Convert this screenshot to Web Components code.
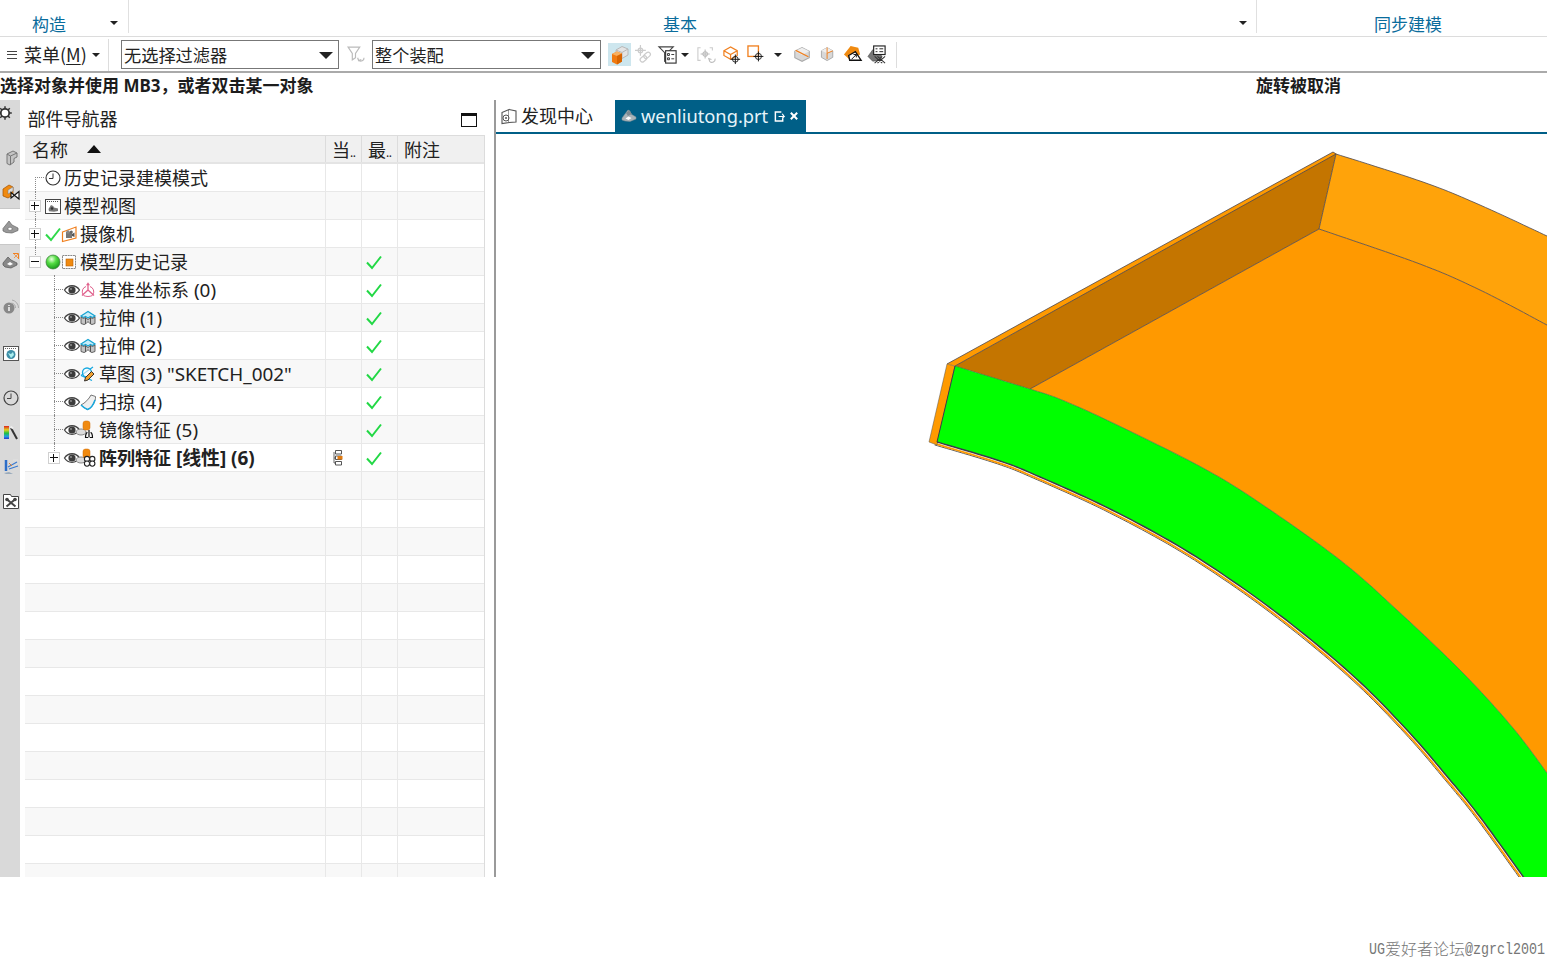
<!DOCTYPE html>
<html lang="zh"><head><meta charset="utf-8"><title>NX</title>
<style>
html,body{margin:0;padding:0;background:#fff;overflow:hidden}
body{font-family:"Noto Sans","Noto Sans CJK SC",sans-serif;color:#222}
</style></head><body>
<ug-app>
  <ug-ribbon>
    <ug-ribbon-group style="--w:129px;--pad:32px;--arrow:110px" arrow>构造</ug-ribbon-group>
    <ug-ribbon-group style="--w:1128px;--pad:534px;--arrow:1110px" arrow>基本</ug-ribbon-group>
    <ug-ribbon-group style="--w:290px;--pad:117px">同步建模</ug-ribbon-group>
  </ug-ribbon>
  <ug-toolbar></ug-toolbar>
  <ug-status></ug-status>
  <ug-main>
    <ug-rail></ug-rail>
    <ug-navigator></ug-navigator>
    <ug-workspace></ug-workspace>
  </ug-main>
  <ug-footer></ug-footer>
</ug-app>
<script>
const P=(b,vb='0 0 16 16')=>`<svg xmlns="http://www.w3.org/2000/svg" viewBox="${vb}" width="100%" height="100%" style="display:block;overflow:visible">${b}</svg>`;
const CROSS=(x,y,r=3)=>`<circle cx="${x}" cy="${y}" r="${r}" fill="none" stroke="#222" stroke-width="1"/><path d="M${x-r-2} ${y}H${x+r+2}M${x} ${y-r-2}V${y+r+2}" stroke="#111" stroke-width="1"/>`;
const ICONS={
 clock:P('<circle cx="8" cy="8" r="7" fill="#fff" stroke="#333" stroke-width="1.100"/><path d="M8 3.500V8.500H4" fill="none" stroke="#333" stroke-width="1"/>'),
 view:P('<rect x=".5" y="1.500" width="15" height="14" fill="#fff" stroke="#444"/><path d="M2 3.500H14" stroke="#555" stroke-dasharray="1 1"/><path d="M3.500 11l2.500-4 2.200 1 .8 1.500L13 10.500v2.500l-4 .8-5-.5z" fill="#777"/><circle cx="7" cy="10.500" r="1.300" fill="#333"/>'),
 cam:P('<path d="M1.500 6L15 1v11L1.500 15.500z" fill="#fff" stroke="#f08020" stroke-width="1.200"/><rect x="5" y="6" width="6" height="6" fill="#777"/><circle cx="7" cy="6" r="1.800" fill="#888"/><circle cx="10.300" cy="6" r="1.500" fill="#666"/><path d="M11 8l2.500-1.500v4.500L11 10z" fill="#555"/>'),
 check:P('<path d="M1 8.500l5 5.500L15 2.500" fill="none" stroke="#2fd94a" stroke-width="2"/>'),
 ball:`<svg viewBox="0 0 16 16" width="100%" height="100%" style="display:block"><defs><radialGradient id="g" cx=".4" cy=".3" r=".8"><stop offset="0" stop-color="#e9ffe0"/><stop offset=".4" stop-color="#55dd44"/><stop offset="1" stop-color="#0a8a10"/></radialGradient></defs><circle cx="8" cy="8" r="7" fill="url(#g)" stroke="#3a7a3a" stroke-width=".7"/></svg>`,
 hist:P('<rect x="1.500" y="1.500" width="13" height="13" fill="#fff" stroke="#888" stroke-dasharray="2 .6"/><rect x="5" y="5" width="7" height="7" fill="#f08a10" stroke="#b86000" stroke-width=".6"/>'),
 eye:P('<path d="M.5 8C4 2.300 12 2.300 15.500 8 12 13.700 4 13.700 .5 8z" fill="#fff" stroke="#444" stroke-width="1.300"/><circle cx="8" cy="8" r="3.600" fill="#3c3c3c"/><circle cx="7" cy="7" r=".9" fill="#999"/>'),
 datum:P('<path d="M8 2v6M8 8l-6 5.500M8 8l6 5.500" fill="none" stroke="#e0608c" stroke-width="1.300"/><path d="M3 12.500a5.500 5.500 0 0 1 3-8M13 12.500a5.500 5.500 0 0 0-3-8M3.500 13.500c3 1.300 6 1.300 9 0" fill="none" stroke="#e0608c" stroke-width="1"/><path d="M8 .2l2 3h-4z" fill="#e0608c"/>'),
 extrude:P('<path d="M1 6l7-4.500L15 6l-2.500 1.500-2-1L8 8 5.500 6.500l-2 1z" fill="#c8eefa" stroke="#18a4d2" stroke-width="1.300"/><path d="M1 7v6.500l3 1 1.500-.5V7.500L3.500 8.500zM15 7v6.500l-3 1-1.500-.5V7.500l2 1zM5.500 8L8 9.500 10.500 8v6c-1-1-1.500-2-2.500-2s-1.500 1-2.500 2z" fill="#c4c4c4" stroke="#555" stroke-width=".9"/>'),
 sketch:P('<path d="M1 9.500L13 1M1 9.500l11 5" fill="none" stroke="#15a8e0" stroke-width="1.200"/><circle cx="7" cy="6.500" r="4.500" fill="#fff" fill-opacity=".6" stroke="#15a8e0" stroke-width="1.300"/><path d="M4.500 15l1-3.500 6-6 2.500 2.500-6 6z" fill="#f0a030" stroke="#222" stroke-width=".9"/>'),
 sweep:P('<path d="M1 11C5 9 9 5 11 1l4.500 1.500C16 7 12 14 7.500 15.500 5 14.500 2.500 12.500 1 11z" fill="#efefef" stroke="#777" stroke-width="1"/><path d="M1 11c2 2 4.500 3.800 6.500 4.500 3-.8 6-5 7.500-9.500" fill="none" stroke="#18a8de" stroke-width="1.500"/>'),
 mirror:P('<ellipse cx="1" cy="10" rx="5" ry="3" fill="#ddd" stroke="#888"/><rect x="3" y="-1" width="7" height="9" rx="2.500" fill="#f08a10" stroke="#d06a00" stroke-width=".5"/><path d="M9 15.500V8M5.500 15.500c0-4 1.500-5 2-5M12.500 15.500c0-4-1.500-5-2-5M5 15.500h3M10 15.500h3" fill="none" stroke="#111" stroke-width="1.200"/>'),
 pattern:P('<ellipse cx="1" cy="10" rx="5" ry="3" fill="#ddd" stroke="#888"/><rect x="3" y="-1" width="7" height="9" rx="2.500" fill="#f08a10" stroke="#d06a00" stroke-width=".5"/><g fill="#fff" stroke="#222" stroke-width="1.100"><circle cx="7" cy="9" r="2.600"/><circle cx="12.300" cy="9" r="2.600"/><circle cx="7" cy="13.600" r="2.600"/><circle cx="12.300" cy="13.600" r="2.600"/></g>'),
 tree:P('<path d="M3.500 .5h6v3.500h-6zM3.500 6h6v3.500h-6zM3.500 11.500h6v3.500h-6z" fill="#fff" stroke="#444" stroke-width=".9"/><rect x="5.500" y="6" width="5" height="3.500" fill="#e07a10"/><path d="M2 2v11h2M2 8h2" fill="none" stroke="#444" stroke-width=".8"/>','0 0 12 16'),
 okchk:P('<path d="M1 8.500l5 5.500L15 2.500" fill="none" stroke="#22d845" stroke-width="2"/>'),
 gear:P('<circle cx="8" cy="8" r="4.200" fill="#fff" stroke="#333" stroke-width="1.800"/><path d="M8 1.200v2.500M8 12.300v2.500M1.200 8h2.500M12.300 8h2.500M3.200 3.200l1.800 1.800M11 11l1.800 1.800M3.200 12.800L5 11M11 5l1.800-1.800" stroke="#333" stroke-width="1.500"/>'),
 rpart:P('<path d="M4 4l6-3 4 2v4l-3 1.500V12l-4 3-3-1.500z" fill="#c4c4c4" stroke="#777"/><path d="M4 4l3.500 2L14 3M7.500 6v9" fill="none" stroke="#777"/>'),
 rasm:P('<path d="M0 5l6-4 4 2v8l-5 3-5-2z" fill="#f08a10" stroke="#a05000" stroke-width=".7"/><path d="M5 6l5-3v4L5 10z" fill="#ddd" stroke="#777" stroke-width=".5"/><path d="M8 8.500l8 6.500V7.500L8 14z" fill="#fff" stroke="#111" stroke-width="1.100"/>'),
 rhist:P('<path d="M0 9.500L6 2l3 4 6 3v2.500l-6 2.500-6-.5L0 12z" fill="#999" stroke="#666" stroke-width=".7"/><path d="M4 10l3-2 3 2-3 1.500z" fill="#fff" stroke="#666" stroke-width=".6"/>'),
 rdep:P('<path d="M0 10l5-6 3 3 6 3v2l-6 3-6-1-2-2z" fill="#888" stroke="#555" stroke-width=".7"/><path d="M4 11l3-2 3 2-3 1.500z" fill="#fff"/><path d="M10 .5h5.500V6" fill="none" stroke="#f08020"/><path d="M11 1l4 4M15 1l-4 4" stroke="#f08020" stroke-width=".7"/>'),
 rinfo:P('<circle cx="6" cy="9" r="5.500" fill="#888"/><path d="M6 6v.9M6 8v4" stroke="#fff" stroke-width="1.400"/><path d="M9 1a8 8 0 0 1 6.500 8M8.500 4a5 5 0 0 1 4 5" fill="none" stroke="#aaa"/>'),
 rweb:P('<rect x=".5" y="1.500" width="15" height="14" fill="#fff" stroke="#555"/><path d="M2 3.500h12" stroke="#666" stroke-dasharray="1 1"/><circle cx="8" cy="9.500" r="4.500" fill="#3f8fa8"/><path d="M5 8l3 1 2-2 1 3-3 3z" fill="#aee"/>'),
 rclock:P('<circle cx="8" cy="8" r="7" fill="none" stroke="#444" stroke-width="1.200"/><path d="M8 3.500V8.500H4" fill="none" stroke="#444" stroke-width="1"/>'),
 rpal:P('<defs><linearGradient id="rb" x1="0" y1="0" x2="0" y2="1"><stop offset="0" stop-color="#e02020"/><stop offset=".3" stop-color="#e0d020"/><stop offset=".55" stop-color="#20c040"/><stop offset=".8" stop-color="#20a0e0"/><stop offset="1" stop-color="#3030d0"/></linearGradient></defs><rect x="1" y="1" width="5" height="13" fill="url(#rb)"/><path d="M8 3l6 11" stroke="#333" stroke-width="2"/><path d="M7.500 1.500l2.500 2" stroke="#eee" stroke-width="2"/>'),
 rtool:P('<path d="M3 1v11" stroke="#2d6ec8" stroke-width="2.500"/><path d="M1 14l5-1 4 2H3z" fill="#9ab"/><path d="M5 8l9-5M6 10l9-3" stroke="#3a7ad0" stroke-width="1.200"/><path d="M6 4l3 3" stroke="#e08030"/><path d="M10 1l5 0" stroke="#ddd" stroke-width="2"/>'),
 rroles:P('<path d="M.5 1.500h7l1 2h7v12H.5z" fill="#fff" stroke="#444"/><path d="M3.500 6l9 7.500M12.500 6l-9 7.500" stroke="#444" stroke-width="2"/><circle cx="4" cy="6.500" r="1.800" fill="#444"/><circle cx="12" cy="6.500" r="1.800" fill="#444"/>'),
 filter:P('<path d="M1 1h11L8 7v4l-3 2V7z" fill="#fff" stroke="#bbb" stroke-width="1.100"/><path d="M16 11a3 3 0 0 1-5 2.500M10 11l1 2.800 2.500-1" fill="none" stroke="#bbb" stroke-width="1.100"/>'),
 t1:P('<path d="M7 6l6-3.500 6 2.500v6l-6 3.500-6-2.500z" fill="#e4e4e4" stroke="#b8b8b8"/><path d="M7 6l6 2.500 6-3.500M13 8.500v6" fill="none" stroke="#b8b8b8"/><path d="M3 10l5-2.500 5 2v8L8 20.500 3 18z" fill="#f07a10"/><path d="M3 10l5-2.500 5 2-5 2.500z" fill="#f8b060"/><path d="M8 12l5-2.500v8L8 20.500z" fill="#d86400"/>','0 0 21 21'),
 t2:P('<g fill="none" stroke="#ccc" stroke-width="1.300"><circle cx="6" cy="6" r="2.500"/><path d="M6 0v12M0 6h12"/><rect x="9" y="9" width="8" height="5" rx="2.500" transform="rotate(-40 13 11)"/><rect x="5" y="13" width="8" height="5" rx="2.500" transform="rotate(-40 9 15)"/></g>','0 0 21 21'),
 t3:P('<path d="M1 2h15l-6 6v7l-3 2V8z" fill="#fff" stroke="#444" stroke-width="1.200"/><rect x="8" y="6" width="11" height="13" fill="#fff" stroke="#333" stroke-width="1.200"/><path d="M10 9h2v2h-2zM14 10h3M10 13.500h2v2h-2zM14 14.500h3" fill="none" stroke="#333"/>','0 0 21 21'),
 t4:P('<path d="M4 3H1v14h3M14 3h3v3" fill="none" stroke="#ccc" stroke-width="1.200"/><g fill="none" stroke="#bbb" stroke-width="1.200"><circle cx="9" cy="10" r="2.500"/><path d="M9 5v10M4 10h10"/><path d="M20 15a3.500 3.500 0 0 1-6 3l-1-3 3 1"/></g>','0 0 21 21'),
 t5:P('<path d="M2 6l7-4 7 4v5l-7 4-7-4z M2 6l7 4 7-4M9 10v5" fill="#fff" stroke="#f08020" stroke-width="1.300"/>'+CROSS(14,15,3),'0 0 21 21'),
 t6:P('<rect x="1" y="1" width="11" height="11" fill="none" stroke="#f08020" stroke-width="1.400"/>'+CROSS(12,12,3.200),'0 0 21 21'),
 t7:P('<path d="M1 7l8-4 8 4v7l-8 4-8-4z" fill="#d8d8d8" stroke="#aaa" stroke-width="1.200"/><path d="M1 7l8 4 8-4-8-4z" fill="#eee"/><path d="M2 6l14 7" stroke="#f08020" stroke-width="1.500"/>','0 0 19 21'),
 t8:P('<path d="M2 6l7-4 7 4v8l-7 4-7-4z" fill="#d8d8d8" stroke="#aaa" stroke-width="1.200"/><path d="M2 6l7 3 7-3-7-4z" fill="#eee"/><path d="M9 2v14M9 9l7-3" stroke="#f08020" stroke-width="1.200" fill="none"/>','0 0 19 21'),
 t9:P('<path d="M1 10L8 1l8 2 2 7-5 2-4 5z" fill="#f08a10"/><path d="M6 11l7-4 6 9H7z" fill="#fff" stroke="#111" stroke-width="1.400"/><path d="M9 15l5-5M11 10h3v3" fill="none" stroke="#111"/>','0 0 21 21'),
 t10:P('<path d="M1 12L6 5h5l4 5v6l-9 1z" fill="#777" stroke="#444" stroke-width=".6"/><rect x="7" y="1" width="12" height="9" fill="#fff" stroke="#222" stroke-width="1.200"/><path d="M9 4h2M9 7h2M13 4h4M13 7h4" stroke="#222"/><path d="M8 12l8 7M16 12l-8 7M11 12l8 7M19 12l-8 7" stroke="#333" stroke-width="1.100"/>','0 0 21 21'),
 disc:P('<path d="M1 4.500l7-3v13l-7 1z" fill="#fff" stroke="#555" stroke-width="1.100"/><path d="M8 1.500l7 1.500v11l-7 .5" fill="#fff" stroke="#555" stroke-width="1.100"/><circle cx="5" cy="10" r="3" fill="none" stroke="#555"/><circle cx="5" cy="10" r="1" fill="#555"/>'),
 tabpart:P('<path d="M1 10L7 2l2 1 1 3 5 3v2l-6 2.500-5-.5L1 12z" fill="#a9b3b8" stroke="#7f8c92" stroke-width=".5"/><path d="M4.500 10.500l3-2 3 1.500-3 2z" fill="#fff"/><path d="M8 2.500L11 6 7 8 5 5z" fill="#7d8a92"/>'),
 undock:P('<path d="M8 2H1.500v10h8v-3" fill="none" stroke="#fff" stroke-width="1.600"/><path d="M5 7h6l-2-3M11 7L9 9" fill="none" stroke="#fff" stroke-width="1.300"/>','0 0 12 14'),
 close:P('<path d="M2 2l7 7M9 2L2 9" stroke="#fff" stroke-width="2.200"/>','0 0 11 11'),
};
function shadow(el,html){const r=el.attachShadow({mode:'open'});r.innerHTML=html;return r}
const def=(n,c)=>customElements.define(n,c);
def('ug-icon',class extends HTMLElement{connectedCallback(){if(this.shadowRoot)return;
 const s=this.getAttribute('size')||16,h=this.getAttribute('h')||s;
 shadow(this,`<style>:host{display:block;flex:none;width:${s}px;height:${h}px}</style>${ICONS[this.getAttribute('name')]||''}`)}});
def('ug-caret',class extends HTMLElement{constructor(){super();shadow(this,`<style>:host{display:block;flex:none;width:0;height:0;border-left:var(--s,4px) solid transparent;border-right:var(--s,4px) solid transparent;border-top:var(--s,4px) solid #222}</style>`)}});
def('ug-app',class extends HTMLElement{constructor(){super();shadow(this,`<style>:host{display:flex;flex-direction:column;width:1547px;height:960px;overflow:hidden;background:#fff}</style><slot></slot>`)}});
def('ug-ribbon',class extends HTMLElement{constructor(){super();shadow(this,`<style>:host{display:flex;height:36px;border-bottom:1px solid #dcdcdc;flex:none}</style><slot></slot>`)}});
def('ug-ribbon-group',class extends HTMLElement{constructor(){super();shadow(this,`<style>
 :host{display:block;position:relative;box-sizing:border-box;width:var(--w);height:33px;padding:14px 0 0 var(--pad);font-size:17px;line-height:22px;color:#0a6c9c;border-right:1px solid #e0e0e0}
 :host(:last-child){border-right:0}
 ug-caret{position:absolute;left:var(--arrow);top:21px;--s:4px}
 </style><slot></slot><ug-caret></ug-caret>`)}
 connectedCallback(){if(!this.hasAttribute('arrow'))this.shadowRoot.querySelector('ug-caret').style.display='none'}});
def('ug-combo',class extends HTMLElement{constructor(){super();shadow(this,`<style>
 :host{display:flex;align-items:center;box-sizing:border-box;height:29px;border:1px solid #777;background:#fff;padding:0 5px 0 2px;font-size:17.2px;justify-content:space-between;color:#222;flex:none}
 ug-caret{--s:7px;margin-top:1px}
 </style><span><slot></slot></span><ug-caret></ug-caret>`)}});
def('ug-toolbar',class extends HTMLElement{constructor(){super();
 const t=(n,m=0,w=24,s=19,bg='')=>`<span class="t" style="margin-left:${m}px;width:${w}px;${bg}"><ug-icon name="${n}" size="${s}"></ug-icon></span>`;
 const a=(m,w=12)=>`<span class="t" style="margin-left:${m}px;width:${w}px"><ug-caret></ug-caret></span>`;
 shadow(this,`<style>
 :host{display:flex;align-items:center;height:34px;box-sizing:border-box;flex:none;font-size:18px;color:#222;padding-top:1px}
 .menu{display:flex;align-items:center;margin-left:7px;width:102px;height:32px;flex:none;box-sizing:border-box;border-right:1px solid #ddd}
 .ham{width:10px;height:8px;border-top:1px solid #444;border-bottom:1px solid #444;position:relative;flex:none;box-sizing:border-box}
 .ham:after{content:"";position:absolute;left:0;right:0;top:2px;border-top:1px solid #444}
 u{text-underline-offset:2px}
 .lbl{margin:-2px 5px 0 7px;white-space:nowrap;font-family:"Noto Sans CJK SC",sans-serif}
 .t{display:flex;align-items:center;justify-content:center;height:23px;flex:none}
 ug-caret{--s:4px}
 .sep{width:1px;height:26px;background:#ddd;flex:none;margin-left:7px}
 </style>
 <div class="menu"><div class="ham"></div><span class="lbl">菜单(<u>M</u>)</span><ug-caret></ug-caret></div>
 <ug-combo style="width:218px;margin-left:12px">无选择过滤器</ug-combo>
 <span class="t" style="margin-left:8px;width:17px"><ug-icon name="filter" size="17"></ug-icon></span>
 <ug-combo style="width:229px;margin-left:8px">整个装配</ug-combo>
 ${t('t1',7,23,21,'background:#cde6ee')}${t('t2',1,24)}${t('t3',0,24,20)}${a(-1)}${t('t4',3,24,19)}${t('t5',2,24,20)}${t('t6',1,24,20)}${a(3)}${t('t7',6,24,19)}${t('t8',1,24,17)}${t('t9',2,24,20)}${t('t10',0,24,20)}
 <span class="sep"></span>`)}});
def('ug-status',class extends HTMLElement{constructor(){super();shadow(this,`<style>
 :host{display:flex;flex:none;height:29px;box-sizing:border-box;border-top:2px solid #aaa;font-size:17px;font-weight:700;line-height:25px;color:#1c1c1c;overflow:hidden}
 .a{width:1256px;flex:none;white-space:nowrap}
 </style><span class="a">选择对象并使用 MB3，或者双击某一对象</span><span>旋转被取消</span>`)}});
def('ug-main',class extends HTMLElement{constructor(){super();shadow(this,`<style>:host{display:flex;height:777px;flex:none;overflow:hidden}</style><slot></slot>`)}});
def('ug-rail',class extends HTMLElement{constructor(){super();
 const items=[['gear',113,-3],['rpart',158,3],['rasm',192,3],['rhist',227,3],['rdep',261,3],['rinfo',307,3],['rweb',353,3],['rclock',398,3],['rpal',433,3],['rtool',467,3],['rroles',501,3]];
 let end=100;const html=items.map(([n,c,dx])=>{const m=c-8-end;end=c+8;return `<ug-icon name="${n}" style="margin-top:${m}px;margin-left:${dx}px"></ug-icon>`}).join('');
 shadow(this,`<style>:host{display:block;position:relative;flex:none;width:20px;height:100%;background:#d9d9d9}
 .band{position:absolute;left:0;top:108px;width:20px;height:37px;background:#fff;border-top:1px solid #c8c8c8;border-bottom:1px solid #c8c8c8;box-sizing:border-box}
 .col{position:relative;display:flex;flex-direction:column}
 </style><div class="band"></div><div class="col">${html}</div>`)}});
def('ug-tree-row',class extends HTMLElement{connectedCallback(){if(this.shadowRoot)return;
 const a=k=>this.getAttribute(k);
 const lvl=+(a('level')||0),icons=(a('icons')||'').split(',').filter(Boolean);
 const exp=a('exp'),v=a('v'),h=a('h');
 const lx=lvl?29:10,bx=lvl?23:4;
 const label=a('label')||'';const sp=label.indexOf(' ');
 const head=sp<0?label:label.slice(0,sp),tail=sp<0?'':label.slice(sp);
 shadow(this,`<style>
 :host{display:grid;grid-template-columns:300px 36px 36px 1fr;grid-template-rows:27px;height:28px;box-sizing:border-box;border-bottom:1px solid #e8e8e8;position:relative;background:var(--bg,#fff);font-size:18px;color:#222}
 .c0{display:flex;align-items:center;white-space:nowrap;position:relative}
 .c{border-left:1px solid #e8e8e8;display:flex;align-items:center}
 .ind{flex:none;width:${lvl?39:20}px}
 .txt{margin-left:3px;padding-top:2px;line-height:25px;white-space:pre;${a('bold')!==null?'font-weight:700;':''}}
 .tail{font-size:18.900px}
 .vl{position:absolute;border-left:1px dotted #8a8a8a;left:${lx}px;width:0}
 .hl{position:absolute;border-top:1px dotted #8a8a8a;left:${lx}px;width:9px;top:13px}
 .ex{position:absolute;left:${bx}px;top:8px;width:12px;height:12px;box-sizing:border-box;border:1px solid #d0d0d0;background:#fff}
 .ex:before{content:"";position:absolute;left:1px;right:1px;top:4px;border-top:1px solid #111}
 .ex.p:after{content:"";position:absolute;top:1px;bottom:1px;left:4px;border-left:1px solid #111}
 </style>
 <div class="c0">
 ${v==='full'?'<i class="vl" style="top:-1px;height:28px"></i>':''}
 ${v==='top'?'<i class="vl" style="top:-1px;height:14px"></i>':''}
 ${v==='bot'?'<i class="vl" style="top:13px;height:15px"></i>':''}
 ${h!==null?'<i class="hl"></i>':''}
 ${exp?`<i class="ex ${exp==='+'?'p':''}"></i>`:''}
 <span class="ind"></span>${icons.map(n=>`<ug-icon name="${n}"></ug-icon>`).join('')}<span class="txt">${head}<span class="tail">${tail}</span></span></div>
 <div class="c" style="padding-left:6px">${a('cur')?`<ug-icon name="tree" size="12" h="16"></ug-icon>`:''}</div>
 <div class="c" style="padding-left:4px">${a('ok')!==null?'<ug-icon name="okchk"></ug-icon>':''}</div>
 <div class="c"></div>`)}});
def('ug-navigator',class extends HTMLElement{constructor(){super();
 const rows=[
 'level=0 icons=clock label="历史记录建模模式" v=bot h',
 'level=0 exp=+ icons=view label="模型视图" v=full',
 'level=0 exp=+ icons=check,cam label="摄像机" v=full',
 'level=0 exp=- icons=ball,hist label="模型历史记录" v=top ok',
 'level=1 icons=eye,datum label="基准坐标系 (0)" v=full h ok',
 'level=1 icons=eye,extrude label="拉伸 (1)" v=full h ok',
 'level=1 icons=eye,extrude label="拉伸 (2)" v=full h ok',
 'level=1 icons=eye,sketch label=\'草图 (3) &quot;SKETCH_002&quot;\' v=full h ok',
 'level=1 icons=eye,sweep label="扫掠 (4)" v=full h ok',
 'level=1 icons=eye,mirror label="镜像特征 (5)" v=full h ok',
 'level=1 exp=+ icons=eye,pattern label="阵列特征 [线性] (6)" v=top bold cur=1 ok',
 ];
 let h=rows.map((r,i)=>`<ug-tree-row ${r} style="--bg:${i%2?'#f8f8f8':'#fff'}"></ug-tree-row>`).join('');
 for(let i=rows.length;i<26;i++)h+=`<ug-tree-row style="--bg:${i%2?'#f8f8f8':'#fff'}"></ug-tree-row>`;
 shadow(this,`<style>
 :host{display:flex;flex-direction:column;flex:none;width:465px;height:100%;box-sizing:border-box;padding:0 0 0 5px;overflow:hidden}
 .title{display:flex;align-items:center;justify-content:space-between;height:35px;flex:none;font-size:18px;color:#222;padding:0 8px 0 2.500px;box-sizing:border-box}
 .max{width:16px;height:14px;border:1px solid #111;border-top-width:3px;box-sizing:border-box;flex:none;margin-top:4px}
 .tbl{flex:1;overflow:hidden;border:1px solid #dcdcdc;border-width:1px 1px 0 0;box-sizing:border-box;width:460px}
 .hd{display:grid;grid-template-columns:300px 36px 36px 1fr;height:28px;box-sizing:border-box;background:#f0f0f0;border-bottom:2px solid #e4e4e4;font-size:18px;line-height:26px;color:#222}
 .hd>div{border-left:1px solid #dcdcdc;padding:2px 0 0 6px;box-sizing:border-box;white-space:nowrap;display:flex;align-items:center;height:26px}
 .hd>div:first-child{border-left:0;padding-left:7px}
 .up{width:0;height:0;border:7px solid transparent;border-top:0;border-bottom:8px solid #111;margin:-2px 0 0 19px}
 small{font-size:12px;margin-top:6px;letter-spacing:-.5px}
 </style>
 <div class="title"><span>部件导航器</span><span class="max"></span></div>
 <div class="tbl"><div class="hd"><div>名称<span class="up"></span></div><div>当<small>..</small></div><div>最<small>..</small></div><div>附注</div></div>${h}</div>`)}});
def('ug-tabs',class extends HTMLElement{constructor(){super();shadow(this,`<style>
 :host{display:flex;height:34px;flex:none;box-sizing:border-box;border-bottom:2px solid #005f87;font-size:18px;color:#222;padding-left:5px}
 .t{display:flex;align-items:center;width:114px;flex:none}
 .t ug-icon{margin-right:4px}
 .t span{margin-top:-2px}
 .a{display:flex;align-items:center;width:191px;flex:none;background:#005f87;color:#e6f4fa;font-size:18.300px;padding-left:6px;box-sizing:border-box}
 .a span{margin:0 6px 0 0;line-height:30px}
 </style>
 <div class="t"><ug-icon name="disc"></ug-icon><span>发现中心</span></div>
 <div class="a"><ug-icon name="tabpart" style="margin-right:4px"></ug-icon><span>wenliutong.prt</span><ug-icon name="undock" size="11" h="13" style="margin-right:4px"></ug-icon><ug-icon name="close" size="10"></ug-icon></div>`)}});
def('ug-viewport',class extends HTMLElement{constructor(){super();
 const cr=(p,n=12)=>{const o=[];for(let i=0;i<p.length-1;i++){const a=p[Math.max(0,i-1)],b=p[i],c=p[i+1],d=p[Math.min(p.length-1,i+2)];for(let k=0;k<n;k++){const t=k/n,t2=t*t,t3=t2*t;o.push([.5*(2*b[0]+(c[0]-a[0])*t+(2*a[0]-5*b[0]+4*c[0]-d[0])*t2+(3*b[0]-a[0]-3*c[0]+d[0])*t3),.5*(2*b[1]+(c[1]-a[1])*t+(2*a[1]-5*b[1]+4*c[1]-d[1])*t2+(3*b[1]-a[1]-3*c[1]+d[1])*t3)])}}o.push(p[p.length-1]);return o};
 const S=a=>a.map(q=>q[0].toFixed(1)+','+q[1].toFixed(1)).join(' ');
 const wallTop=cr([[1336,154],[1423,182],[1480,205],[1547,236]]);
 const wallLow=cr([[1319,229],[1420,264],[1480,290],[1547,325]]);
 const up=cr([[955,366],[1030,389],[1062,400],[1113,423],[1203,468],[1260,503],[1340,560],[1397,610],[1463,673],[1513,728],[1547,773]]);
 const low=cr([[937,442],[1000,461],[1040,477],[1112,510],[1190,553],[1273,610],[1350,673],[1407,730],[1450,780],[1480,817],[1527,882]]);
 const upFloor=up.slice(12);
 const low2=low.map(q=>[q[0]-1.6,q[1]+1.8]);
 const low3=low.map(q=>[q[0]-2.4,q[1]+2.9]);
 const e='stroke="#4a4650" stroke-width=".8" fill="none"';
 shadow(this,`<style>:host{display:block;flex:1;overflow:hidden;background:#fff}svg{display:block}</style>
 <svg xmlns="http://www.w3.org/2000/svg" width="1051" height="743" viewBox="496 134 1051 743">
 <polygon points="947,364 1333,152 1337,154 955,366" fill="#ff9a00"/>
 <polygon points="955,366 1336,154 1319,229 1030,389" fill="#c47500"/>
 <polygon points="${S(wallTop)} 1547,325 ${S(wallLow.slice().reverse())}" fill="#ffa30a"/>
 <polygon points="${S(wallLow)} ${S(upFloor.slice().reverse())}" fill="#ff9900"/>
 <polyline points="947,364 1333,152 1336,154" ${e}/>
 <polyline points="955,366 1336,154 1319,229 1030,389" ${e}/>
 <polyline points="${S(wallTop)}" ${e}/><polyline points="${S(wallLow)}" ${e}/>
 <polyline points="${S(low3)}" fill="none" stroke="#5a5a5a" stroke-width="1"/>
 <polyline points="${S(low2)}" fill="none" stroke="#ff9a00" stroke-width="1.800"/>
 <polygon points="947,364 929,442 937,445 955,366" fill="#ff9a00" stroke="#555" stroke-width=".5"/>
 <polygon points="${S(up)} 1547,877 ${S(low.slice().reverse())}" fill="#00ff00"/>
 <polyline points="${S(up)}" stroke="#44604a" stroke-width=".6" fill="none"/>
 <polyline points="${S(low)}" fill="none" stroke="#3d3a48" stroke-width="1.500"/>
 <polyline points="955,366 937,442" fill="none" stroke="#3d3a48" stroke-width="1"/>
 </svg>`)}});
def('ug-workspace',class extends HTMLElement{constructor(){super();shadow(this,`<style>
 :host{display:flex;flex-direction:column;flex:1;margin-left:9px;border-left:2px solid #9a9a9a;box-sizing:border-box;height:100%;overflow:hidden}
 </style><ug-tabs></ug-tabs><ug-viewport></ug-viewport>`)}});
def('ug-footer',class extends HTMLElement{constructor(){super();shadow(this,`<style>
 :host{display:block;flex:1;text-align:right;box-sizing:border-box;padding:60px 2px 0 0;font-size:16px;line-height:22px;color:#777;font-family:"Liberation Mono",monospace;white-space:nowrap}
 .l{font-size:13.340px;display:inline-block;transform:scaleY(1.2)}
 .c{font-family:"Noto Sans CJK SC",sans-serif;font-weight:300;vertical-align:-2px}
 </style><span class="l">UG</span><span class="c">爱好者论坛</span><span class="l">@zgrcl2001</span>`)}});
</script>
</body></html>
